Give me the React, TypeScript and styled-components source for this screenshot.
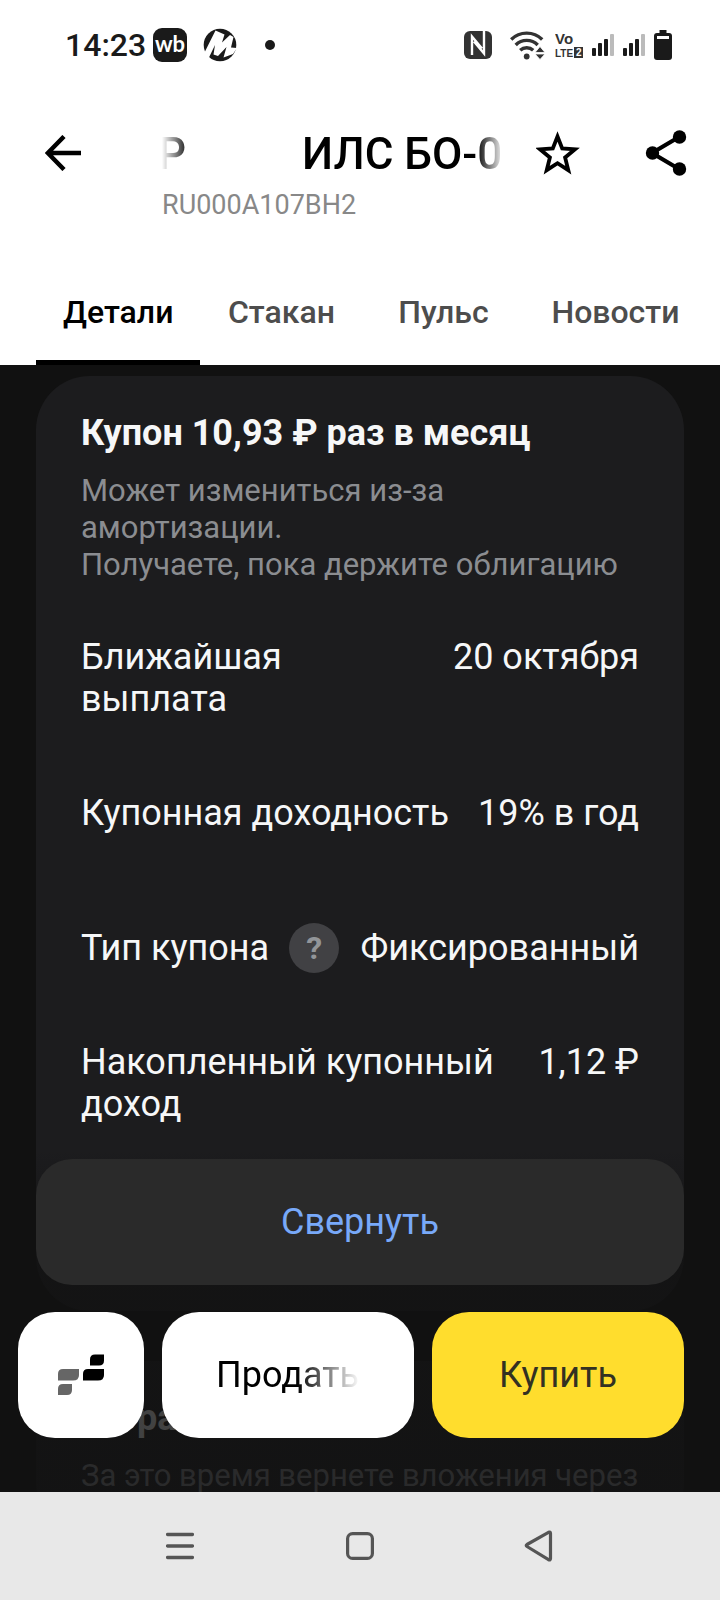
import React from 'react';
import styled, { createGlobalStyle } from 'styled-components';

const GlobalStyle = createGlobalStyle`
  * { box-sizing: border-box; }
  body { margin: 0; background: #111111; font-family: Roboto, "Noto Sans", sans-serif; }
  button { font: inherit; border: 0; padding: 0; background: none; color: inherit; cursor: pointer; }
  h1, h2, p, dl, dt, dd { margin: 0; }
`;

const Screen = styled.div`
  display: flex;
  flex-direction: column;
  height: 100vh;
  background: #111111;
`;

const Top = styled.header`
  flex: none;
  background: #ffffff;
  color: #000000;
`;

const StatusBar = styled.div`
  display: flex;
  align-items: center;
  justify-content: space-between;
  height: 90px;
  padding: 0 48px 0 65px;
  color: #1a1a1a;
`;

const StatusGroup = styled.div<{ $gap: number }>`
  display: flex;
  align-items: center;
  gap: ${(p) => p.$gap}px;
`;

const Clock = styled.time`
  font-size: 32px;
  line-height: 38px;
  font-weight: 500;
  width: 80px;
`;

const WbBadge = styled.span`
  display: flex;
  align-items: center;
  justify-content: center;
  width: 34px;
  height: 34px;
  margin-left: -8px;
  border-radius: 9px;
  background: #1a1a1a;
  color: #ffffff;
  font: 700 22px/30px Lato, sans-serif;
  padding-bottom: 2px;
`;

const Dot = styled.span`
  width: 10px;
  height: 10px;
  margin-left: 12px;
  border-radius: 50%;
  background: #1a1a1a;
`;

const AppBar = styled.div`
  display: flex;
  align-items: flex-start;
  padding: 36px 27px 0 36px;
`;

const IconButton = styled.button`
  display: grid;
  place-items: center;
  flex: none;
  width: 54px;
  height: 54px;
`;

const TitleBlock = styled.div`
  flex: 1;
  min-width: 0;
  margin: 2px 27px 0 72px;
`;

const Title = styled.h1`
  overflow: hidden;
  white-space: nowrap;
  font-size: 44px;
  line-height: 52px;
  font-weight: 500;
  mask-image: linear-gradient(to right, transparent, #000 28px, #000 calc(100% - 28px), transparent);
`;

/* The marquee track, scrolled slightly past its left edge. */
const TitleTrack = styled.span`
  display: flex;
  gap: 116px;
  margin-left: -4px;
`;

const Ticker = styled.p`
  margin-top: 10px;
  color: #888888;
  font-size: 27px;
  line-height: 30px;
`;

const Actions = styled.div`
  display: flex;
  gap: 54px;
`;

const Tabs = styled.nav`
  display: flex;
  margin-top: 36px;
  padding-left: 36px;
  overflow: hidden;
`;

const Tab = styled.button<{ $active?: boolean }>`
  flex: none;
  min-width: 162px;
  padding: 37px 27px 29px;
  border-bottom: 5px solid ${(p) => (p.$active ? '#000000' : 'transparent')};
  color: ${(p) => (p.$active ? '#000000' : '#4d4d4d')};
  font-size: 32px;
  line-height: 38px;
  font-weight: 500;
`;

const Body = styled.main`
  position: relative;
  flex: 1;
  min-height: 0;
  overflow: hidden;
`;

const Scroller = styled.div`
  display: flex;
  flex-direction: column;
  gap: 50px;
  height: 100%;
  padding: 11px 36px 0;
  overflow-y: auto;
  scrollbar-width: none;
`;

const Card = styled.section`
  flex: none;
  border-radius: 54px;
  background: #1c1c1e;
  color: #f6f7f8;
  padding-bottom: 26px;
`;

const CardHead = styled.div`
  padding: 36px 45px 17px;
`;

const CardTitle = styled.h2`
  font-size: 36px;
  line-height: 42px;
  font-weight: 700;
`;

const CardNote = styled.p`
  margin-top: 18px;
  color: #8b8d91;
  font-size: 31px;
  line-height: 37px;
`;

const Row = styled.div<{ $raised?: boolean }>`
  display: flex;
  justify-content: space-between;
  align-items: ${(p) => (p.$raised ? 'center' : 'flex-start')};
  gap: 20px;
  padding: ${(p) => (p.$raised ? '53px 45px 32px' : '36px 45px')};
  font-size: 36px;
  line-height: 42px;

  &:last-child {
    padding-bottom: 34px;
  }
`;

const Label = styled.dt`
  display: flex;
  align-items: center;
  gap: 20px;
`;

const Value = styled.dd`
  white-space: nowrap;
`;

const HelpButton = styled.button`
  width: 50px;
  height: 50px;
  border-radius: 50%;
  background: #414144;
  color: #929599;
  font-size: 32px;
  line-height: 50px;
  font-weight: 700;
`;

const Collapse = styled.button`
  position: relative;
  z-index: 2;
  display: block;
  width: 100%;
  height: 126px;
  border-radius: 36px;
  background: #2a2a2a;
  color: #78a9f9;
  font-size: 36px;
  line-height: 42px;
`;

const Shade = styled.div`
  position: absolute;
  inset: auto 0 0;
  height: 342px;
  background: linear-gradient(to bottom, rgba(17, 17, 17, 0), rgba(17, 17, 17, 0.76) 110px, rgba(17, 17, 17, 0.8));
  pointer-events: none;
`;

const OrderBar = styled.div`
  position: absolute;
  z-index: 3;
  inset: auto 0 54px;
  display: grid;
  grid-template-columns: 126px 1fr 1fr;
  gap: 18px;
  padding: 0 36px 0 18px;
`;

const OrderButton = styled.button<{ $tone?: 'accent' }>`
  display: grid;
  place-items: center;
  height: 126px;
  border-radius: 37px;
  background: ${(p) => (p.$tone ? '#ffdd2d' : '#ffffff')};
  color: ${(p) => (p.$tone ? '#333122' : '#000000')};
  font-size: 36px;
  line-height: 42px;
`;

const FadedText = styled.span`
  width: 144px;
  overflow: hidden;
  text-align: left;
  white-space: nowrap;
  mask-image: linear-gradient(to right, #000 56%, transparent);
`;

const SystemNav = styled.nav`
  display: grid;
  grid-template-columns: repeat(3, 180px);
  justify-content: center;
  align-items: center;
  flex: none;
  height: 108px;
  background: #e8e8e8;
  color: #555555;
`;

const SystemButton = styled.button`
  display: grid;
  place-items: center;
  height: 80px;
`;

const NfcIcon = styled.svg`
  margin-right: 9px;
`;

const LogoM = () => (
  <svg width="34" height="34" viewBox="0 0 34 34" aria-hidden="true">
    <circle cx="17" cy="17" r="16.3" fill="#1a1a1a" />
    <path d="M0 27.500 12.500 2.500l9 4-2.500 8 8-7.500 3.500 2-2.500 10.500 6 .5-4 6-9.500 3.500 3-10.500-8.500 9-4.500-1.500 1.500-9.500L5 31.500z" fill="#fff" />
  </svg>
);

const Nfc = () => (
  <NfcIcon width="28" height="28" viewBox="0 0 28 28" aria-hidden="true">
    <rect width="28" height="28" rx="6" fill="#333" />
    <path d="M8 24V5.500L18 17.500M20 0V22.500L10 10.500" fill="none" stroke="#fff" strokeWidth="2.400" />
  </NfcIcon>
);

const Wifi = () => (
  <svg width="36" height="30" viewBox="0 0 36 30" aria-hidden="true">
    <g fill="none" stroke="#333" strokeWidth="3.400">
      <path d="M1.200 9.500a22 22 0 0 1 31 0" />
      <path d="M5.700 15a15.500 15.500 0 0 1 22 0" />
      <path d="M10.200 20.300a9.500 9.500 0 0 1 13 0" />
    </g>
    <circle cx="16.700" cy="26.500" r="2.900" fill="#333" />
    <path d="M25 22.500l5-6 5 6zM25 24l5 5.500 5-5.500z" fill="#333" stroke="#fff" strokeWidth=".8" />
  </svg>
);

const VoLte = () => (
  <svg width="28" height="30" viewBox="0 0 28 30" fill="#333" fontFamily="'Liberation Sans Narrow', 'Liberation Sans', sans-serif" fontWeight="700" aria-label="VoLTE 2">
    <text x="0" y="14" fontSize="15">Vo</text>
    <text x="0" y="27" fontSize="10">LTE</text>
    <rect x="19" y="17" width="9" height="11" />
    <text x="21" y="26" fontSize="10" fill="#fff">2</text>
  </svg>
);

const Signal = () => (
  <svg width="22" height="22" viewBox="0 0 22 22" aria-hidden="true" fill="#1a1a1a">
    <rect y="14" width="4" height="8" rx="1" />
    <rect x="6" y="9" width="4" height="13" rx="1" />
    <rect x="12" y="5" width="4" height="17" rx="1" />
    <rect x="18" width="4" height="22" rx="1" fill="#bbb" />
  </svg>
);

const Battery = () => (
  <svg width="18" height="30" viewBox="0 0 18 30" aria-hidden="true">
    <rect x="5.500" y="0" width="7" height="5" fill="#1a1a1a" />
    <rect y="3" width="18" height="27" rx="3" fill="#1a1a1a" />
    <rect x="3" y="6" width="12" height="3" fill="#fff" />
  </svg>
);

const BackArrow = () => (
  <svg width="36" height="36" viewBox="0 0 36 36" aria-hidden="true" fill="none" stroke="#000" strokeWidth="4.500">
    <path d="M36 18H3M19 1.500 2.800 18 19 34.500" />
  </svg>
);

const Star = () => (
  <svg width="44" height="44" viewBox="0 0 44 44" aria-hidden="true">
    <path d="M21.500 5.500l4.700 11.900 12.800.900-9.900 8.200 3.200 12.700L21.500 32.200l-10.800 7 3.200-12.700-9.900-8.200 12.800-.900z" fill="none" stroke="#000" strokeWidth="3.800" />
  </svg>
);

const Share = () => (
  <svg width="42" height="46" viewBox="0 0 42 46" aria-hidden="true">
    <path d="M34 7 7 23l27 16" fill="none" stroke="#000" strokeWidth="4.200" />
    <circle cx="34.500" cy="7" r="6.700" />
    <circle cx="7.500" cy="23" r="6.700" />
    <circle cx="34.500" cy="39" r="6.700" />
  </svg>
);

const TerminalLogo = () => (
  <svg width="46" height="42" viewBox="0 0 46 42" aria-hidden="true">
    <path d="M37 .5h9v6q0 5-5 5h-9V5.500q0-5 5-5z" />
    <path d="M30 15h16v6q0 5.500-6 5.500H25V20q0-5 5-5z" />
    <path d="M5 15h16v6q0 5.500-6 5.500H0V20q0-5 5-5z" fill="#666" />
    <path d="M5 30h9v6q0 5-5 5H0v-6q0-5 5-5z" fill="#666" />
  </svg>
);

export default function App() {
  return (
    <>
      <GlobalStyle />
      <Screen>
        <Top>
          <StatusBar>
            <StatusGroup $gap={16}>
              <Clock>14:23</Clock>
              <WbBadge>wb</WbBadge>
              <LogoM />
              <Dot />
            </StatusGroup>
            <StatusGroup $gap={9}>
              <Nfc />
              <Wifi />
              <VoLte />
              <Signal />
              <Signal />
              <Battery />
            </StatusGroup>
          </StatusBar>
          <AppBar>
            <IconButton aria-label="Назад"><BackArrow /></IconButton>
            <TitleBlock>
              <Title>
                <TitleTrack><span>Р</span><span>ИЛС БО-0</span></TitleTrack>
              </Title>
              <Ticker>RU000A107BH2</Ticker>
            </TitleBlock>
            <Actions>
              <IconButton aria-label="В избранное"><Star /></IconButton>
              <IconButton aria-label="Поделиться"><Share /></IconButton>
            </Actions>
          </AppBar>
          <Tabs>
            <Tab $active aria-current="page">Детали</Tab>
            <Tab>Стакан</Tab>
            <Tab>Пульс</Tab>
            <Tab>Новости</Tab>
          </Tabs>
        </Top>

        <Body>
          <Scroller>
            <Card>
              <CardHead>
                <CardTitle>Купон 10,93 ₽ раз в месяц</CardTitle>
                <CardNote>
                  Может измениться из-за<br />амортизации.<br />Получаете, пока держите облигацию
                </CardNote>
              </CardHead>
              <dl>
                <Row>
                  <Label>Ближайшая<br />выплата</Label>
                  <Value>20 октября</Value>
                </Row>
                <Row>
                  <Label>Купонная доходность</Label>
                  <Value>19% в год</Value>
                </Row>
                <Row $raised>
                  <Label>Тип купона <HelpButton aria-label="Что такое тип купона">?</HelpButton></Label>
                  <Value>Фиксированный</Value>
                </Row>
                <Row>
                  <Label>Накопленный купонный<br />доход</Label>
                  <Value>1,12 ₽</Value>
                </Row>
              </dl>
              <Collapse>Свернуть</Collapse>
            </Card>
            <Card>
              <CardHead>
                <CardTitle>Дюрация</CardTitle>
                <CardNote>За это время вернете вложения через</CardNote>
              </CardHead>
            </Card>
          </Scroller>
          <Shade />
          <OrderBar>
            <OrderButton aria-label="Терминал"><TerminalLogo /></OrderButton>
            <OrderButton><FadedText>Продать</FadedText></OrderButton>
            <OrderButton $tone="accent">Купить</OrderButton>
          </OrderBar>
        </Body>

        <SystemNav>
          <SystemButton aria-label="Недавние">
            <svg width="28" height="28" viewBox="0 0 28 28" fill="none" stroke="currentColor" strokeWidth="3.300" strokeLinecap="round">
              <path d="M1.500 2.500h25M1.500 14h25M1.500 25.500h25" />
            </svg>
          </SystemButton>
          <SystemButton aria-label="Домой">
            <svg width="28" height="28" viewBox="0 0 28 28" fill="none" stroke="currentColor" strokeWidth="3.200">
              <rect x="1.600" y="1.600" width="24.800" height="24.800" rx="5" />
            </svg>
          </SystemButton>
          <SystemButton aria-label="Назад">
            <svg width="32" height="32" viewBox="0 0 32 32" fill="none" stroke="currentColor" strokeWidth="3.200" strokeLinejoin="round">
              <path d="M26.500 3.500q0-2-2-1.200L3 14.500q-1.500 1 0 2L24.500 29.700q2 .8 2-1.200z" />
            </svg>
          </SystemButton>
        </SystemNav>
      </Screen>
    </>
  );
}
